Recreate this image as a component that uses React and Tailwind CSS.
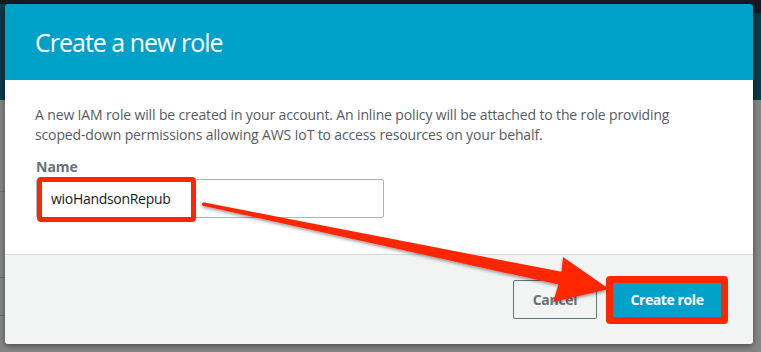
import React from "react";

export default function App() {
  return (
    <div
      className="relative w-[761px] h-[352px] overflow-hidden bg-[#868686]"
      style={{ fontFamily: '"Open Sans", "Noto Sans", sans-serif' }}
    >
      {/* backdrop page (dimmed) */}
      <div className="absolute inset-0 flex flex-col">
        <div className="h-[4px] bg-[#151a23]" />
        <div className="h-[96px] bg-[#0b3a47]" />
        <div className="flex-1 bg-[#868686]" />
      </div>
      <div className="absolute right-0 top-0 w-[10px] h-[13px] bg-[#151a23]" />
      <div className="absolute left-0 top-[191px] w-[5px] h-px bg-[#6f6f6f]" />
      <div className="absolute left-0 top-[277px] w-[5px] h-px bg-[#6f6f6f]" />
      <div className="absolute left-0 top-[315px] w-[5px] h-px bg-[#6f6f6f]" />

      {/* modal */}
      <div className="relative ml-[5px] mt-[4px] w-[748px] h-[340px] rounded-[3px] overflow-hidden flex flex-col shadow-[0_2px_6px_rgba(0,0,0,0.45)]">
        <div className="h-[76px] bg-[#00a1c9] flex items-center px-[30px]">
          <h2 className="text-white text-[25px] leading-none tracking-[-1px]">Create a new role</h2>
        </div>
        <div className="h-[174px] bg-white px-[30px] pt-[25px]">
          <p className="text-[14px] leading-[20px] text-[#545b64] tracking-[-0.14px]">
            A new IAM role will be created in your account. An inline policy will be attached to the role providing
            <br />
            scoped-down permissions allowing AWS IoT to access resources on your behalf.
          </p>
          <div className="mt-[12px] text-[14px] leading-[20px] font-bold text-[#687078] pl-[1px]">Name</div>
          <div className="relative mt-[2px] ml-[1px] w-[348px] h-[39px] border border-[#aab7b8] rounded-[2px] flex items-center pl-[14px]">
            <span className="text-[14px] text-[#16191f] tracking-[-0.3px]">wioHandsonRepub</span>
            <div className="absolute left-[0px] top-[-3px] w-[159px] h-[45px] border-[5px] border-[#ff2600] rounded-[4px]" />
          </div>
        </div>
        <div className="flex-1 bg-[#f2f3f3] border-t border-[#d5dbdb] flex items-center justify-end pr-[25px]">
          <div className="w-[84px] h-[39px] border border-[#687078] rounded-[2px] flex items-center justify-center text-[14px] font-bold text-[#687078] tracking-[-0.3px]">
            Cancel
          </div>
          <div className="ml-[9px] p-[7px] bg-[#ff2600] rounded-[4px]">
            <div className="w-[108px] h-[34px] bg-[#00a1c9] flex items-center justify-center text-[14px] font-bold text-white tracking-[-0.4px]">
              Create role
            </div>
          </div>
        </div>
      </div>

      {/* annotation arrow */}
      <svg className="absolute left-0 top-0" width="761" height="352" viewBox="0 0 761 352">
        <defs>
          <filter id="sh" x="-10%" y="-10%" width="120%" height="140%">
            <feDropShadow dx="0" dy="2" stdDeviation="1.5" floodColor="#000" floodOpacity="0.35" />
          </filter>
        </defs>
        <polygon
          filter="url(#sh)"
          fill="#ff2600"
          points="203.3,202.3 561.5,271.8 563,257 609,289 553,302 558.5,284.6 202.7,205.7 201.5,204"
        />
      </svg>
    </div>
  );
}
